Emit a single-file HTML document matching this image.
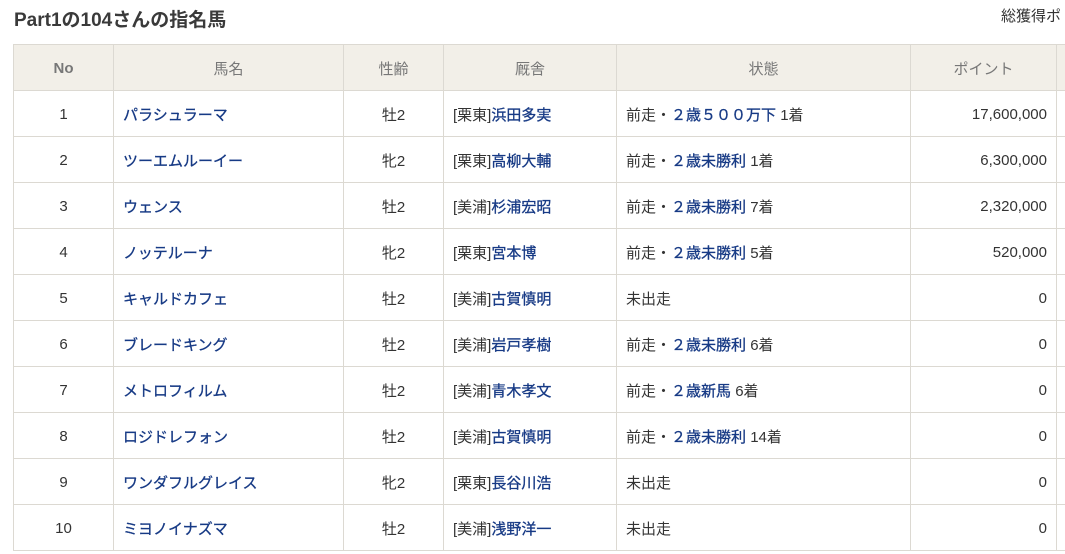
<!DOCTYPE html>
<html><head><meta charset="utf-8"><style>
body{margin:0;background:#fff;width:1065px;height:554px;overflow:hidden;font-family:"Liberation Sans","Noto Sans CJK JP",sans-serif;color:#333;}
h1{position:absolute;left:14px;top:5px;margin:0;font-size:19px;font-weight:bold;color:#3a3a3a;}
.tot{position:absolute;left:1001px;top:5px;font-size:15px;color:#333;white-space:nowrap;}
table{position:absolute;left:13px;top:44px;border-collapse:collapse;table-layout:fixed;width:1100px;font-size:15px;}
th,td{border:1px solid #dcd9d2;height:43px;padding:2px 9px 0;white-space:nowrap;overflow:hidden;box-sizing:content-box;}
th{background:#f2efe8;color:#777;font-weight:normal;}
td.c{text-align:center}td.r{text-align:right}
a{color:#173a85;text-decoration:none;-webkit-text-stroke:0.3px #173a85;}
</style></head><body>
<h1>Part1の104さんの指名馬</h1>
<div class="tot">総獲得ポ</div>
<table>
<colgroup><col style="width:100px"><col style="width:230px"><col style="width:100px"><col style="width:173px"><col style="width:294px"><col style="width:146px"><col style="width:57px"></colgroup>
<tr><th style="font-weight:bold">No</th><th>馬名</th><th>性齢</th><th>厩舎</th><th>状態</th><th>ポイント</th><th></th></tr>
<tr><td class="c">1</td><td><a>パラシュラーマ</a></td><td class="c">牡2</td><td>[栗東]<a>浜田多実</a></td><td>前走・<a>２歳５００万下</a> 1着</td><td class="r">17,600,000</td><td></td></tr>
<tr><td class="c">2</td><td><a>ツーエムルーイー</a></td><td class="c">牝2</td><td>[栗東]<a>高柳大輔</a></td><td>前走・<a>２歳未勝利</a> 1着</td><td class="r">6,300,000</td><td></td></tr>
<tr><td class="c">3</td><td><a>ウェンス</a></td><td class="c">牡2</td><td>[美浦]<a>杉浦宏昭</a></td><td>前走・<a>２歳未勝利</a> 7着</td><td class="r">2,320,000</td><td></td></tr>
<tr><td class="c">4</td><td><a>ノッテルーナ</a></td><td class="c">牝2</td><td>[栗東]<a>宮本博</a></td><td>前走・<a>２歳未勝利</a> 5着</td><td class="r">520,000</td><td></td></tr>
<tr><td class="c">5</td><td><a>キャルドカフェ</a></td><td class="c">牡2</td><td>[美浦]<a>古賀慎明</a></td><td>未出走</td><td class="r">0</td><td></td></tr>
<tr><td class="c">6</td><td><a>ブレードキング</a></td><td class="c">牡2</td><td>[美浦]<a>岩戸孝樹</a></td><td>前走・<a>２歳未勝利</a> 6着</td><td class="r">0</td><td></td></tr>
<tr><td class="c">7</td><td><a>メトロフィルム</a></td><td class="c">牡2</td><td>[美浦]<a>青木孝文</a></td><td>前走・<a>２歳新馬</a> 6着</td><td class="r">0</td><td></td></tr>
<tr><td class="c">8</td><td><a>ロジドレフォン</a></td><td class="c">牡2</td><td>[美浦]<a>古賀慎明</a></td><td>前走・<a>２歳未勝利</a> 14着</td><td class="r">0</td><td></td></tr>
<tr><td class="c">9</td><td><a>ワンダフルグレイス</a></td><td class="c">牝2</td><td>[栗東]<a>長谷川浩</a></td><td>未出走</td><td class="r">0</td><td></td></tr>
<tr><td class="c">10</td><td><a>ミヨノイナズマ</a></td><td class="c">牡2</td><td>[美浦]<a>浅野洋一</a></td><td>未出走</td><td class="r">0</td><td></td></tr>
</table>
</body></html>
